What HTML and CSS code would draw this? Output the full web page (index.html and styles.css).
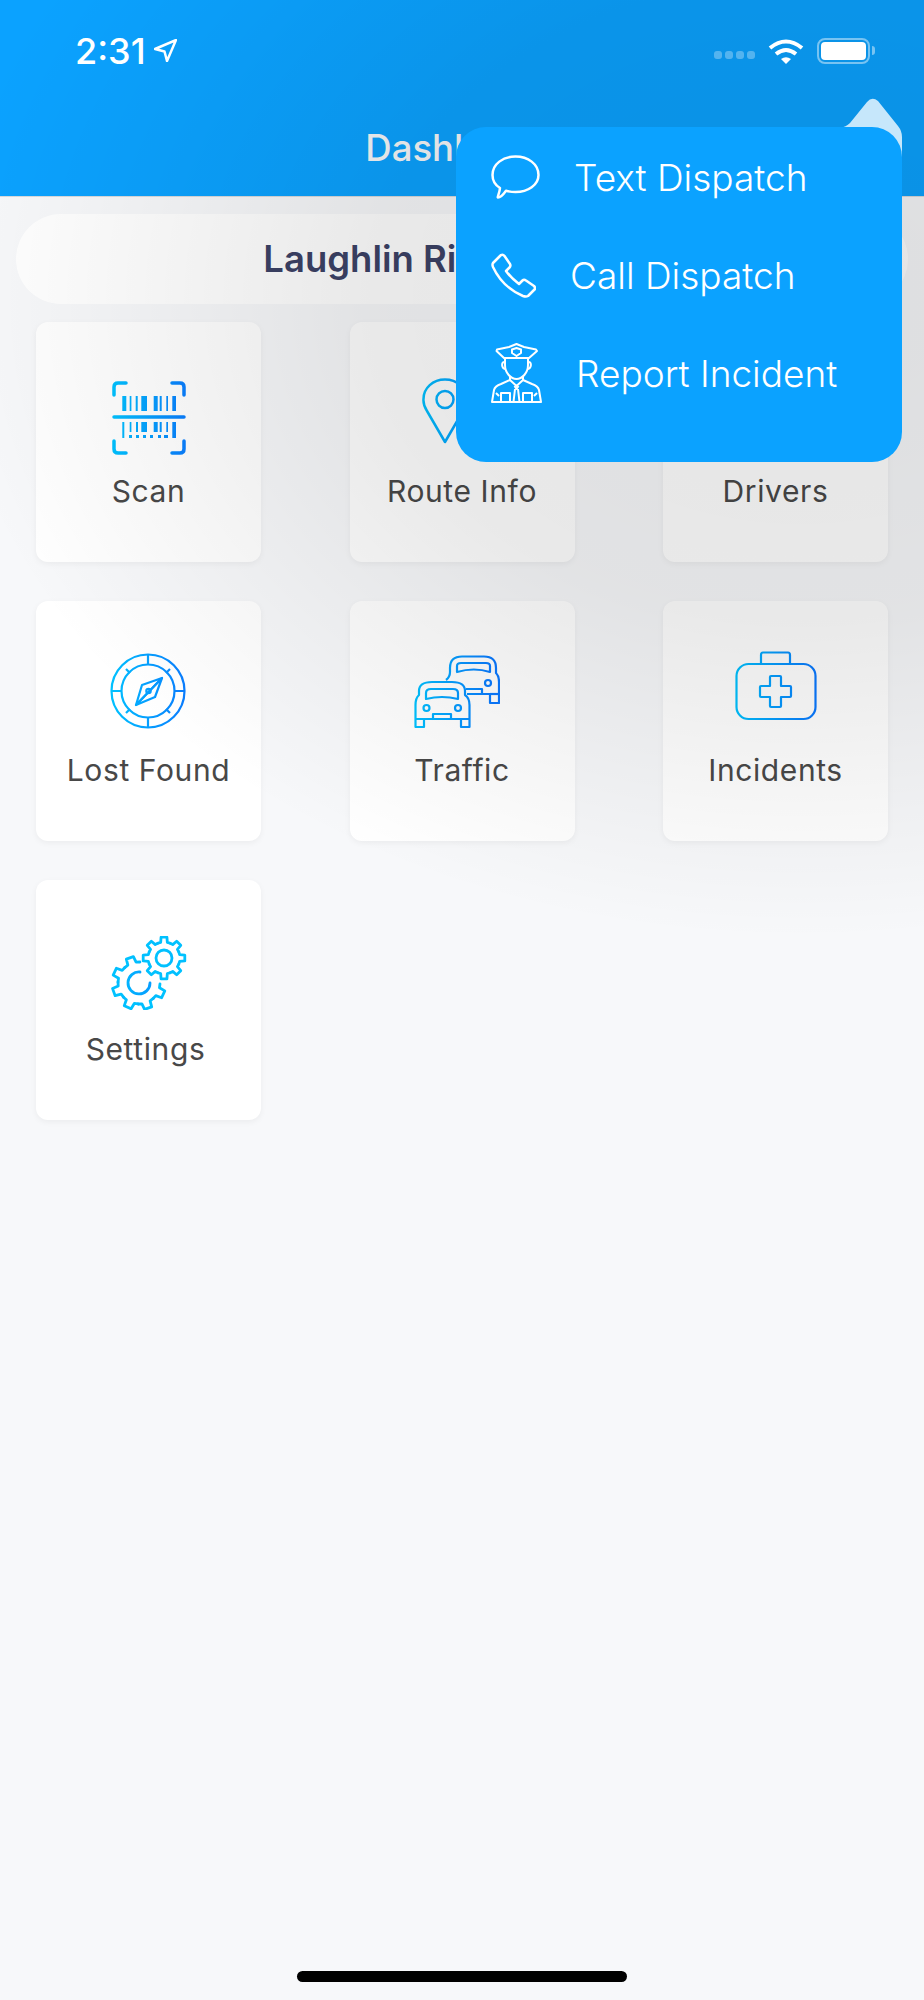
FILE: index.html
```html
<!DOCTYPE html>
<html>
<head>
  <title>Dashboard</title>
  <link rel="stylesheet" href="styles.css">
</head>
<body>
  <!-- Shared icon gradient -->
  <svg class="defs" width="0" height="0">
    <defs>
      <linearGradient id="iconGrad" x1="0" y1="0" x2="80" y2="0" gradientUnits="userSpaceOnUse">
        <stop stop-color="#00c2ff" />
        <stop offset="1" stop-color="#0a78ff" />
      </linearGradient>
    </defs>
  </svg>

  <div class="screen">
    <header class="header">
      <div class="status">
        <div class="clock">
          <span>2:31</span>
          <svg width="23" height="23" viewBox="0 0 23 23" fill="none" stroke="#fff" stroke-width="2.5" stroke-linejoin="round">
            <path d="M22 1L1 10L10.5 12.5L13 22Z" />
          </svg>
        </div>
        <div class="status-right">
          <div class="signal"><i></i><i></i><i></i><i></i></div>
          <svg width="36" height="26" viewBox="0 0 36 26" fill="none" stroke="#fff" stroke-width="4">
            <path d="M2 10Q18 -3 34 10" />
            <path d="M8 16Q18 8 28 16" />
            <path d="M13 21Q18 17.500 23 21L18 26Z" fill="#fff" stroke="none" />
          </svg>
          <div class="battery"><b></b></div>
          <div class="battery-nub"></div>
        </div>
      </div>
      <h1 class="title">Dashboard</h1>
    </header>

    <div class="pill">Laughlin Riverside Tour</div>

    <div class="grid">
      <div class="card">
        <div class="icon-box">
          <svg class="icon-scan" width="74" height="74" viewBox="0 0 74 74" fill="none" stroke="url(#iconGrad)" stroke-width="3.5" stroke-linecap="round">
            <path d="M2 14V6Q2 2 6 2H14M60 2H68Q72 2 72 6V14M2 60V68Q2 72 6 72H14M60 72H68Q72 72 72 68V60" />
            <path d="M2 36H72" />
            <g fill="url(#iconGrad)" stroke="none">
              <rect x="10.300" y="15" width="4" height="15" /><rect x="17.700" y="15" width="1.700" height="15" />
              <rect x="23.700" y="15" width="2" height="15" /><rect x="29.300" y="15" width="5.700" height="15" />
              <rect x="41.700" y="15" width="4" height="15" /><rect x="47.700" y="15" width="2" height="15" />
              <rect x="54.300" y="15" width="1.700" height="15" /><rect x="60.300" y="15" width="3.700" height="15" />
              <rect x="10.300" y="41" width="2" height="16" /><rect x="17.700" y="41" width="1.700" height="10" />
              <rect x="24" y="41" width="2" height="10" /><rect x="29.300" y="41" width="5.700" height="10" />
              <rect x="41.700" y="41" width="4" height="10" /><rect x="47.700" y="41" width="2" height="10" />
              <rect x="54.300" y="41" width="1.700" height="10" /><rect x="60.300" y="41" width="3.700" height="16" />
              <rect x="17" y="54" width="3" height="3" /><rect x="24" y="54" width="3" height="3" />
              <rect x="31" y="54" width="3" height="3" /><rect x="38" y="54" width="3" height="3" />
              <rect x="46" y="54" width="3" height="3" /><rect x="52" y="54" width="4" height="3" />
            </g>
          </svg>
        </div>
        <span class="label">Scan</span>
      </div>

      <div class="card">
        <div class="icon-box">
          <svg class="icon-pin" width="46" height="66" viewBox="0 0 46 66" fill="none" stroke="url(#iconGrad)" stroke-width="2.5" stroke-linejoin="round">
            <path d="M23 64L5 33C1 27 1.500 21 1.500 21C1.500 10 11 1.500 23 1.500C35 1.500 44.500 10 44.500 21C44.500 21 45 27 41 33Z" />
            <circle cx="23" cy="21.500" r="8.500" />
          </svg>
        </div>
        <span class="label">Route Info</span>
      </div>

      <div class="card">
        <div class="icon-box"></div>
        <span class="label">Drivers</span>
      </div>

      <div class="card">
        <div class="icon-box">
          <svg class="icon-compass" width="76" height="76" viewBox="0 0 76 76" fill="none" stroke="url(#iconGrad)" stroke-width="2.200" stroke-linejoin="round">
            <circle cx="38" cy="38" r="36.500" />
            <circle cx="38" cy="38" r="26.500" />
            <path d="M38 1.500V11.500M38 64.500V74.500M1.500 38H11.500M64.500 38H74.500" />
            <path d="M16 16L20 20M60 16L56 20M16 60L20 56M60 60L56 56" />
            <path d="M52 25L26 52L32 32Z" />
            <path d="M52 25L26 52L45 44Z" />
            <circle cx="38.500" cy="38" r="2.200" />
          </svg>
        </div>
        <span class="label">Lost Found</span>
      </div>

      <div class="card">
        <div class="icon-box">
          <svg class="icon-traffic" width="86" height="74" viewBox="0 0 86 74" fill="none" stroke="url(#iconGrad)" stroke-width="2.200" stroke-linejoin="round">
            <!-- back car -->
            <path d="M32 25Q36 22 36 17V13Q36 1.500 48 1.500H70Q82 1.500 82 13V18Q85 21 85 27V48H76V39H53" />
            <path d="M43 17V11Q43 8 47 8H72Q76 8 76 11V17Q60 12 43 17Z" />
            <circle cx="74" cy="28" r="3" />
            <path d="M76 39H85" />
            <path d="M52 34H68V39" />
            <!-- front car -->
            <path d="M1.500 72V50Q1.500 43 5 40V36Q5 27 18 27H38Q51 27 51 36V40Q55.500 43 55.500 50V72H47V64H10V72Z" />
            <path d="M12 44V38Q12 34 17 34H39Q44 34 44 38V44Q28 40 12 44Z" />
            <circle cx="12.500" cy="53" r="3" />
            <circle cx="44" cy="53" r="3" />
            <path d="M19 64V59H37V64M1.500 64H10M47 64H55.500" />
          </svg>
        </div>
        <span class="label">Traffic</span>
      </div>

      <div class="card">
        <div class="icon-box">
          <svg class="icon-kit" width="82" height="70" viewBox="0 0 82 70" fill="none" stroke="url(#iconGrad)" stroke-width="2.200" stroke-linejoin="round">
            <rect x="1.500" y="13" width="79" height="55" rx="12" />
            <path d="M26 13V4Q26 1.500 28 1.500H53Q55 1.500 55 4V13" />
            <path d="M35 26Q35 25 36 25H45Q46 25 46 26V35H55Q56 35 56 36V45Q56 46 55 46H46V55Q46 56 45 56H36Q35 56 35 55V46H26Q25 46 25 45V36Q25 35 26 35H35Z" />
          </svg>
        </div>
        <span class="label">Incidents</span>
      </div>

      <div class="card card-shift">
        <div class="icon-box">
          <svg class="icon-gears" width="76" height="74" viewBox="0 0 76 74" fill="none" stroke="url(#iconGrad)" stroke-width="2.800" stroke-linecap="round" stroke-linejoin="round">
            <defs>
              <path id="toothSmall" d="M-6.120 -14.780L-3.330 -15.650L-2.920 -20.800H2.920L3.330 -15.650L6.120 -14.780" />
              <path id="toothBig" d="M-8.040 -19.400L-4.370 -20.540L-3.760 -26.740H3.760L4.370 -20.540L8.040 -19.400" />
            </defs>
            <!-- big gear, open towards the small one -->
            <g transform="translate(28 47)">
              <use href="#toothBig" transform="rotate(-20)" />
              <use href="#toothBig" transform="rotate(-65)" />
              <use href="#toothBig" transform="rotate(-110)" />
              <use href="#toothBig" transform="rotate(-155)" />
              <use href="#toothBig" transform="rotate(160)" />
              <use href="#toothBig" transform="rotate(115)" />
            </g>
            <path d="M29 36A11 11 0 1 0 39 47" />
            <!-- small gear -->
            <g transform="translate(53 22)">
              <use href="#toothSmall" />
              <use href="#toothSmall" transform="rotate(45)" />
              <use href="#toothSmall" transform="rotate(90)" />
              <use href="#toothSmall" transform="rotate(135)" />
              <use href="#toothSmall" transform="rotate(180)" />
              <use href="#toothSmall" transform="rotate(225)" />
              <use href="#toothSmall" transform="rotate(270)" />
              <use href="#toothSmall" transform="rotate(315)" />
              <circle r="8" />
            </g>
          </svg>
        </div>
        <span class="label">Settings</span>
      </div>
    </div>

    <div class="home-bar"></div>

    <!-- Dimming layer under the menu -->
    <div class="scrim"></div>

    <!-- Contact menu -->
    <svg class="menu-tip" width="64" height="62" viewBox="0 0 64 62">
      <path d="M0 31Q6 30 10 26L27 5Q32 -1 38 4L58 29Q62 34 62 40V62H0Z" />
    </svg>
    <div class="menu">
      <div class="menu-row">
        <svg width="49" height="44" viewBox="0 0 49 44" fill="none" stroke="#fff" stroke-width="2.500" stroke-linejoin="round">
          <path d="M24.500 1.500C37 1.500 47.500 9 47.500 20C47.500 30 37 37 24.500 37C21 37 18 36.500 15 35.700C13 38.500 9 42.500 7 42.500C6 42.500 8.500 38.500 9 33C4 30 1.500 25.500 1.500 20C1.500 9 12 1.500 24.500 1.500Z" />
        </svg>
        <span>Text Dispatch</span>
      </div>
      <div class="menu-row">
        <svg width="45" height="45" viewBox="0 0 45 45" fill="none" stroke="#fff" stroke-width="2.500" stroke-linejoin="round">
          <path d="M2 10L10 2Q12 1 13.500 3L19 11Q20 13 18.500 14.500L15 18Q20 25 28 31L31.500 27.500Q33 26 35 27.500L43 33Q45 35 43.500 36.500L37 43Q35 44 32 43C18 37 8 27 2 14Q1 11.500 2 10Z" />
        </svg>
        <span>Call Dispatch</span>
      </div>
      <div class="menu-row">
        <svg width="51" height="60" viewBox="0 0 51 60" fill="none" stroke="#fff" stroke-width="2" stroke-linejoin="round">
          <path d="M25.500 1L33 4L45 6.500L46 8L38 15H13L5.500 8L6 6.500L18 4Z" />
          <path d="M25.500 5L30 6.500V10L25.500 13L21 10V6.500Z" />
          <path d="M14 15V22C14 30 20 36 25.500 36C31 36 37 30 37 22V15" />
          <path d="M14 19C10 18 10 26 15 26M37 19C41 18 41 26 36 26" />
          <path d="M1 59L3 47Q4 43 10 41L19 37L25.500 43L32 37L41 41Q47 43 48 47L50 59Z" />
          <path d="M19 33V37M32 33V37" />
          <path d="M23.500 43L25.500 46L27.500 43M24 46L22.500 59M27 46L28.500 59" />
          <path d="M10 59V50H19V59M41 59V50H32V59M5 50L8 53M46 50L43 53" />
        </svg>
        <span>Report Incident</span>
      </div>
    </div>
  </div>
</body>
</html>
```

FILE: styles.css
```css
* {
  box-sizing: border-box;
}
html, body {
  margin: 0;
  padding: 0;
}
body {
  font-family: Inter, "Noto Sans", sans-serif;
  background: #f7f8fa;
}
.defs {
  position: absolute;
}
.screen {
  position: relative;
  width: 924px;
  height: 2000px;
  overflow: hidden;
  background: #f7f8fa;
}

/* Header and status bar */
.header {
  height: 197px;
  background: #0ba2ff;
  border-bottom: 1px solid #d8dadd;
}
.status {
  position: relative;
  z-index: 2;
  display: flex;
  justify-content: space-between;
  align-items: center;
  height: 76px;
  padding: 25px 49px 0 76px;
}
.clock {
  display: flex;
  align-items: center;
  gap: 8px;
  margin-left: -1px;
  color: #fff;
  font-size: 36px;
  font-weight: 500;
}
.status-right {
  display: flex;
  align-items: center;
}
.signal {
  display: flex;
  gap: 3px;
  margin: 8px 13px 0 0;
}
.signal i {
  width: 8px;
  height: 8px;
  border-radius: 3px;
  background: rgba(255, 255, 255, 0.3);
}
.battery {
  width: 53px;
  height: 26px;
  margin-left: 13px;
  padding: 2px;
  border: 2px solid rgba(255, 255, 255, 0.45);
  border-radius: 8px;
}
.battery b {
  display: block;
  height: 100%;
  background: #fff;
  border-radius: 4px;
}
.battery-nub {
  width: 3px;
  height: 9px;
  margin-left: 2px;
  border-radius: 0 3px 3px 0;
  background: rgba(255, 255, 255, 0.45);
}
.title {
  margin: 48px 0 0;
  padding-right: 3px;
  color: #f6f8fa;
  font-size: 36.500px;
  font-weight: 500;
  line-height: 48px;
  text-align: center;
}

/* Location pill */
.pill {
  height: 90px;
  margin: 17px 16px 0;
  padding-left: 16px;
  border-radius: 45px;
  background: #fff;
  color: #3c4266;
  font-size: 36.500px;
  font-weight: 600;
  line-height: 90px;
  text-align: center;
}

/* Tiles */
.grid {
  display: grid;
  grid-template-columns: repeat(3, 225px);
  grid-auto-rows: 240px;
  column-gap: 88.500px;
  row-gap: 39px;
  margin-top: 18px;
  padding: 0 36px;
}
.card {
  display: flex;
  flex-direction: column;
  align-items: center;
  background: #fff;
  border-radius: 12px;
  box-shadow: 0 2px 6px rgba(0, 0, 0, 0.05);
}
.icon-box {
  display: flex;
  justify-content: center;
  align-items: flex-start;
  width: 100%;
  height: 149px;
}
.icon-scan {
  margin-top: 59px;
}
.icon-pin {
  margin: 56px 35px 0 0;
}
.icon-compass {
  margin: 52px 2px 0 0;
}
.icon-traffic {
  margin: 54px 10px 0 0;
}
.icon-kit {
  margin-top: 50px;
}
.icon-gears {
  margin-top: 56px;
}
.label {
  color: #484848;
  font-size: 30px;
  line-height: 40px;
  letter-spacing: 0.6px;
}
.card-shift .label {
  margin-right: 6px;
}

.home-bar {
  position: absolute;
  left: 297px;
  bottom: 18px;
  width: 330px;
  height: 11px;
  border-radius: 6px;
  background: #000;
}

/* Menu overlay */
.scrim {
  position: absolute;
  inset: 0;
  background: radial-gradient(ellipse 860px 640px at 800px 300px, rgba(0, 0, 0, 0.105) 0%, rgba(0, 0, 0, 0.085) 50%, rgba(0, 0, 0, 0) 100%);
}
.menu-tip {
  position: absolute;
  left: 840px;
  top: 97px;
}
.menu-tip path {
  fill: #c6e7fb;
}
.menu {
  position: absolute;
  left: 456px;
  top: 127px;
  width: 446px;
  height: 335px;
  padding: 1px 0 40px 35px;
  border-radius: 30px;
  background: #0ba2ff;
}
.menu-row {
  display: flex;
  align-items: center;
  gap: 34px;
  height: 98px;
  color: #fff;
  font-size: 37px;
  font-weight: 300;
}
.menu-row svg {
  flex-shrink: 0;
}
```
